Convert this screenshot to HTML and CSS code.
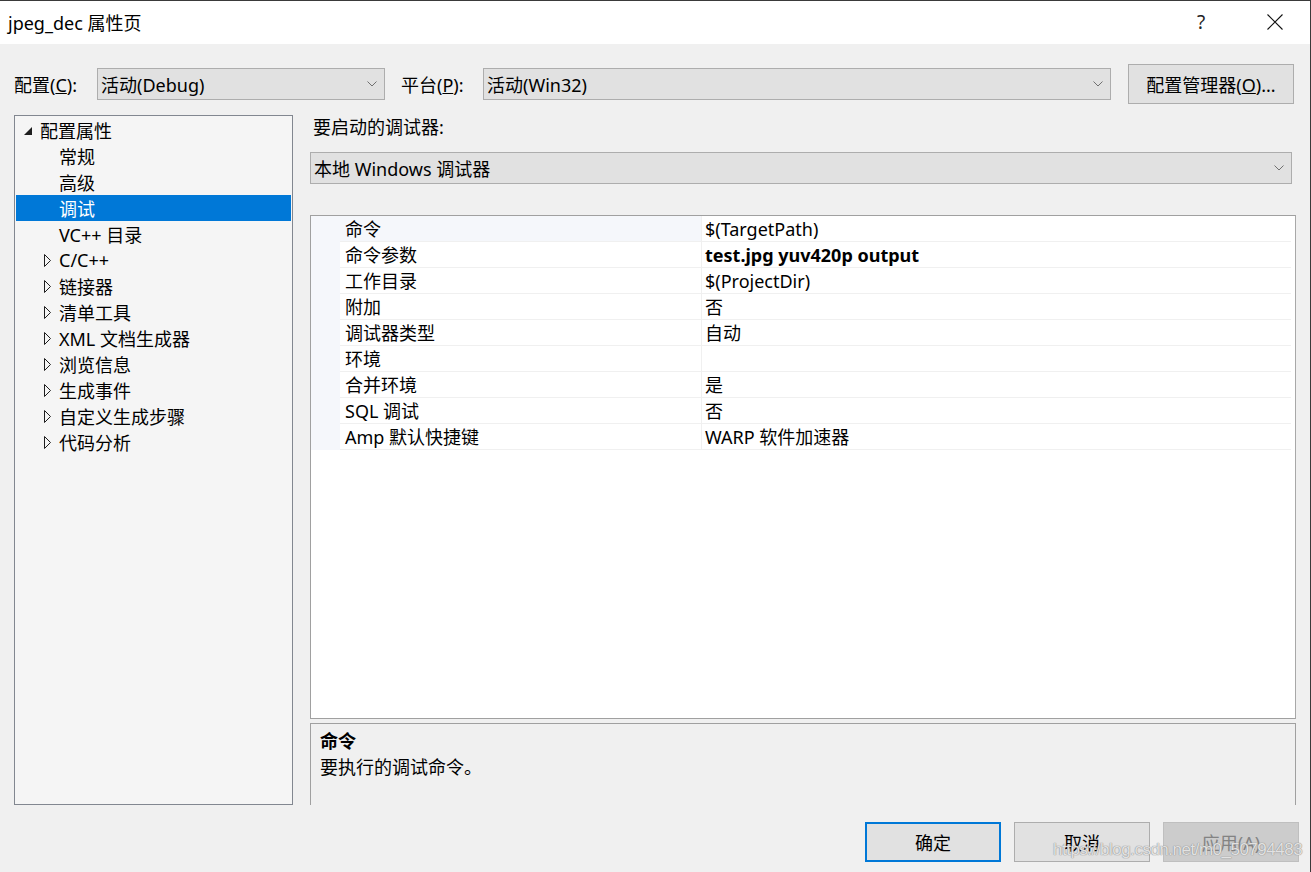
FILE: index.html
```html
<!DOCTYPE html>
<html lang="zh-CN">
<head>
    <meta charset="UTF-8">
    <title>jpeg_dec 属性页</title>
    <link rel="stylesheet" href="styles.css">
</head>
<body>
<div class="window">
    <!-- Title bar -->
    <div class="titlebar">
        <span class="title">jpeg_dec 属性页</span>
        <span class="help">?</span>
        <span class="close">
            <svg width="16" height="16" viewBox="0 0 16 16"><path d="M0.5 0.5 L15.5 15.5 M15.5 0.5 L0.5 15.5" stroke="#111" stroke-width="1.1" fill="none"/></svg>
        </span>
    </div>

    <!-- Configuration / platform selectors -->
    <div class="config-row">
        <span class="field-label">配置(<u>C</u>):</span>
        <div class="combo combo-config">
            <span>活动(Debug)</span>
            <svg class="chevron" width="10" height="6" viewBox="0 0 10 6"><path d="M0.5 0.5 L5 5 L9.5 0.5" stroke="#707070" fill="none"/></svg>
        </div>
        <span class="field-label platform-label">平台(<u>P</u>):</span>
        <div class="combo combo-platform">
            <span>活动(Win32)</span>
            <svg class="chevron" width="10" height="6" viewBox="0 0 10 6"><path d="M0.5 0.5 L5 5 L9.5 0.5" stroke="#707070" fill="none"/></svg>
        </div>
        <button class="btn btn-manager">配置管理器(<u>O</u>)...</button>
    </div>

    <div class="main">
        <!-- Left tree -->
        <ul class="tree">
            <li class="node lvl0"><span class="twisty"><svg width="10" height="10" viewBox="0 0 10 10"><path d="M9 1 L9 9 L1 9 Z" fill="#1e1e1e"/></svg></span>配置属性</li>
            <li class="node lvl1"><span class="twisty"></span>常规</li>
            <li class="node lvl1"><span class="twisty"></span>高级</li>
            <li class="node lvl1 selected"><span class="twisty"></span>调试</li>
            <li class="node lvl1"><span class="twisty"></span>VC++ 目录</li>
            <li class="node lvl1"><span class="twisty"><svg width="8" height="13" viewBox="0 0 8 13"><path d="M0.5 0.5 L6.5 6.5 L0.5 12.5 Z" stroke="#1e1e1e" fill="none"/></svg></span>C/C++</li>
            <li class="node lvl1"><span class="twisty"><svg width="8" height="13" viewBox="0 0 8 13"><path d="M0.5 0.5 L6.5 6.5 L0.5 12.5 Z" stroke="#1e1e1e" fill="none"/></svg></span>链接器</li>
            <li class="node lvl1"><span class="twisty"><svg width="8" height="13" viewBox="0 0 8 13"><path d="M0.5 0.5 L6.5 6.5 L0.5 12.5 Z" stroke="#1e1e1e" fill="none"/></svg></span>清单工具</li>
            <li class="node lvl1"><span class="twisty"><svg width="8" height="13" viewBox="0 0 8 13"><path d="M0.5 0.5 L6.5 6.5 L0.5 12.5 Z" stroke="#1e1e1e" fill="none"/></svg></span>XML 文档生成器</li>
            <li class="node lvl1"><span class="twisty"><svg width="8" height="13" viewBox="0 0 8 13"><path d="M0.5 0.5 L6.5 6.5 L0.5 12.5 Z" stroke="#1e1e1e" fill="none"/></svg></span>浏览信息</li>
            <li class="node lvl1"><span class="twisty"><svg width="8" height="13" viewBox="0 0 8 13"><path d="M0.5 0.5 L6.5 6.5 L0.5 12.5 Z" stroke="#1e1e1e" fill="none"/></svg></span>生成事件</li>
            <li class="node lvl1"><span class="twisty"><svg width="8" height="13" viewBox="0 0 8 13"><path d="M0.5 0.5 L6.5 6.5 L0.5 12.5 Z" stroke="#1e1e1e" fill="none"/></svg></span>自定义生成步骤</li>
            <li class="node lvl1"><span class="twisty"><svg width="8" height="13" viewBox="0 0 8 13"><path d="M0.5 0.5 L6.5 6.5 L0.5 12.5 Z" stroke="#1e1e1e" fill="none"/></svg></span>代码分析</li>
        </ul>

        <!-- Right pane -->
        <div class="pane">
            <div class="pane-label">要启动的调试器:</div>
            <div class="combo combo-debugger">
                <span>本地 Windows 调试器</span>
                <svg class="chevron" width="10" height="6" viewBox="0 0 10 6"><path d="M0.5 0.5 L5 5 L9.5 0.5" stroke="#707070" fill="none"/></svg>
            </div>

            <div class="grid">
                <div class="grid-row current"><span class="gutter"></span><span class="name">命令</span><span class="value">$(TargetPath)</span></div>
                <div class="grid-row"><span class="gutter"></span><span class="name">命令参数</span><span class="value bold">test.jpg yuv420p output</span></div>
                <div class="grid-row"><span class="gutter"></span><span class="name">工作目录</span><span class="value">$(ProjectDir)</span></div>
                <div class="grid-row"><span class="gutter"></span><span class="name">附加</span><span class="value">否</span></div>
                <div class="grid-row"><span class="gutter"></span><span class="name">调试器类型</span><span class="value">自动</span></div>
                <div class="grid-row"><span class="gutter"></span><span class="name">环境</span><span class="value"></span></div>
                <div class="grid-row"><span class="gutter"></span><span class="name">合并环境</span><span class="value">是</span></div>
                <div class="grid-row"><span class="gutter"></span><span class="name">SQL 调试</span><span class="value">否</span></div>
                <div class="grid-row"><span class="gutter"></span><span class="name">Amp 默认快捷键</span><span class="value">WARP 软件加速器</span></div>
            </div>

            <div class="desc">
                <div class="desc-title">命令</div>
                <div class="desc-text">要执行的调试命令。</div>
            </div>
        </div>
    </div>

    <!-- Dialog buttons -->
    <div class="actions">
        <button class="btn btn-action btn-default">确定</button>
        <button class="btn btn-action">取消</button>
        <button class="btn btn-action btn-disabled">应用(A)</button>
    </div>

    <div class="watermark">https://blog.csdn.net/m0_50794483</div>
</div>
</body>
</html>
```

FILE: styles.css
```css
/* Dialog window */
html, body {
    margin: 0;
    padding: 0;
}

body {
    font-family: "Noto Sans", "Noto Sans CJK SC", sans-serif;
    font-size: 18px;
    color: #000;
    background: #f0f0f0;
}

.window {
    position: relative;
    width: 1311px;
    height: 872px;
    box-sizing: border-box;
    border-top: 1px solid #3a3a3a;
    border-right: 1px solid #3a3a3a;
    background: #f0f0f0;
    display: flex;
    flex-direction: column;
    overflow: hidden;
}

.titlebar {
    height: 43px;
    background: #fff;
    display: flex;
    align-items: center;
    padding-left: 8px;
    flex-shrink: 0;
}

.titlebar .title {
    flex: 1;
    margin-top: -1px;
}

.titlebar .help {
    width: 20px;
    color: #222;
    font-size: 19px;
    margin-right: 50px;
    margin-top: -2px;
}

.titlebar .close {
    width: 16px;
    height: 16px;
    margin-right: 27px;
    margin-top: -2px;
}

.titlebar .close svg {
    display: block;
}

/* top selectors */
.config-row {
    display: flex;
    align-items: center;
    height: 40px;
    margin-top: 20px;
    padding-left: 14px;
    padding-right: 16px;
    flex-shrink: 0;
}

.field-label {
    width: 83px;
    flex-shrink: 0;
    white-space: nowrap;
}

.platform-label {
    width: 82px;
    margin-left: 16px;
}

.combo {
    height: 32px;
    box-sizing: border-box;
    background: #e1e1e1;
    border: 1px solid #adadad;
    display: flex;
    align-items: center;
    padding-left: 3px;
    padding-right: 7px;
}

.combo span {
    flex: 1;
    white-space: nowrap;
}

.chevron {
    flex-shrink: 0;
}

.combo-config {
    width: 288px;
}

.combo-platform {
    flex: 1;
}

.btn {
    font-family: inherit;
    font-size: 18px;
    color: #000;
    background: #e1e1e1;
    border: 1px solid #adadad;
    padding: 0;
    cursor: pointer;
}

.btn-manager {
    width: 166px;
    height: 40px;
    margin-left: 17px;
    flex-shrink: 0;
}

/* main area */
.main {
    display: grid;
    grid-template-columns: 279px 1fr;
    column-gap: 17px;
    height: 690px;
    margin-top: 11px;
    padding-left: 14px;
    padding-right: 14px;
    flex-shrink: 0;
}

.tree {
    list-style: none;
    margin: 0;
    padding: 1px;
    background: #f5f5f5;
    border: 1px solid #828790;
    overflow: hidden;
}

.node {
    height: 26px;
    display: flex;
    align-items: center;
    white-space: nowrap;
}

.node .twisty {
    display: flex;
    align-items: center;
    flex-shrink: 0;
}

.lvl0 {
    padding-left: 7px;
}

.lvl0 .twisty {
    width: 17px;
    margin-top: 1px;
}

.lvl1 {
    padding-left: 28px;
}

.lvl1 .twisty {
    width: 15px;
}

.node.selected {
    background: #0078d7;
    color: #fff;
}

.pane {
    display: flex;
    flex-direction: column;
    min-width: 0;
}

.pane-label {
    height: 24px;
    line-height: 24px;
    padding-left: 3px;
    margin-bottom: 13px;
}

.combo-debugger {
    margin-right: 4px;
    margin-bottom: 31px;
    flex-shrink: 0;
}

/* property grid */
.grid {
    flex: 1;
    background: #fff;
    border: 1px solid #a0a0a0;
    border-right-color: #a8a8a8;
}

.grid-row {
    display: grid;
    grid-template-columns: 29px 362px 1fr;
    height: 26px;
    margin-right: 4px;
}

.grid-row span {
    box-sizing: border-box;
    padding-top: 2px;
    line-height: 23px;
    white-space: nowrap;
}

.gutter {
    background: #f5f7fb;
}

.name {
    padding-left: 5px;
    border-bottom: 1px solid #f0f0f0;
    border-right: 1px solid #f0f0f0;
}

.value {
    padding-left: 3px;
    border-bottom: 1px solid #f0f0f0;
}

.current .name {
    background: #f5f7fb;
}

.value.bold {
    font-weight: bold;
}

/* description panel */
.desc {
    height: 82px;
    box-sizing: border-box;
    margin-top: 4px;
    border: 1px solid #a0a0a0;
    border-bottom: none;
    padding: 4px 9px;
    flex-shrink: 0;
}

.desc-title {
    font-weight: bold;
    line-height: 26px;
}

.desc-text {
    line-height: 26px;
}

/* bottom buttons */
.actions {
    display: flex;
    justify-content: flex-end;
    gap: 13px;
    margin-top: 17px;
    padding-right: 11px;
}

.btn-action {
    width: 136px;
    height: 40px;
}

.btn-default {
    border: 2px solid #0078d7;
}

.btn-disabled {
    background: #cccccc;
    border-color: #bfbfbf;
    color: #838383;
}

.watermark {
    position: absolute;
    left: 1053px;
    top: 839px;
    font-family: "Liberation Sans", sans-serif;
    font-size: 17px;
    letter-spacing: -0.5px;
    color: rgba(255, 255, 255, 0.75);
    text-shadow: 0 0 1px #8a8a8a, 0 0 1px #8a8a8a;
    white-space: nowrap;
}
```
